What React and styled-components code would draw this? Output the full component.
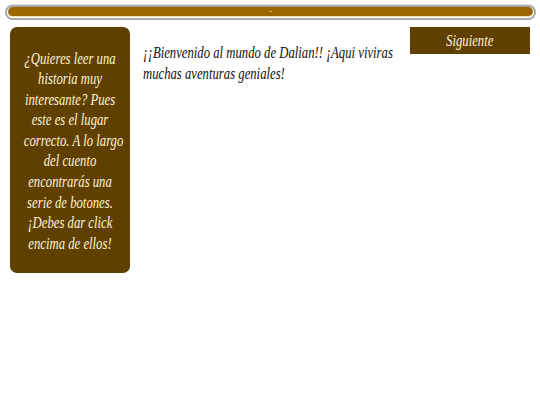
import React from "react";
import styled, { createGlobalStyle } from "styled-components";

const Global = createGlobalStyle`
  html, body { margin: 0; padding: 0; background: #fff; }
  body { font-family: "Liberation Serif", "DejaVu Serif", serif; font-style: italic; }
`;

const Page = styled.div`
  width: 540px;
  height: 405px;
  overflow: hidden;
  padding: 5px 4px 0 5px;
  box-sizing: border-box;
`;

const ProgressBar = styled.div`
  height: 15px;
  box-sizing: border-box;
  border: 2px solid #a8a8a8;
  border-radius: 8px;
  background: #fff;
  padding: 0 1px 1px;
  box-shadow: 0 -1px 0 #e4e4e4;
  display: flex;
`;

const ProgressFill = styled.div`
  flex: 1;
  border-radius: 5px;
  background: #996600;
  border-bottom: 1px solid #f2dfae;
  display: flex;
  align-items: center;
  justify-content: center;
`;

const Tick = styled.span`
  width: 3px;
  height: 1px;
  background: #e0b070;
`;

const Content = styled.div`
  display: flex;
  align-items: flex-start;
  margin-top: 7px;
  padding-left: 5px;
`;

const Sidebar = styled.aside`
  width: 120px;
  height: 246px;
  box-sizing: border-box;
  flex: none;
  padding: 21.5px 0 0;
  border-radius: 7px;
  background: #604000;
  color: #fff2d6;
  font-size: 16.5px;
  line-height: 20.6px;
  text-align: center;
  white-space: nowrap;
`;

const SidebarText = styled.div`
  transform: scaleX(0.77);
`;

const Story = styled.div`
  width: 258px;
  flex: none;
  margin: 15px 0 0 13px;
  color: #111;
  font-size: 16.5px;
  line-height: 21px;
  white-space: nowrap;
  transform: scaleX(0.77);
  transform-origin: left center;
`;

const NextButton = styled.button`
  width: 120px;
  height: 27px;
  flex: none;
  margin-left: 9px;
  padding: 1px 0 0;
  border: 0;
  background: #604000;
  color: #fff2d6;
  font: italic 16.5px "Liberation Serif", serif;
`;

const NextLabel = styled.span`
  display: inline-block;
  transform: scaleX(0.77);
`;

export default function App() {
  return (
    <Page>
      <Global />
      <ProgressBar>
        <ProgressFill>
          <Tick />
        </ProgressFill>
      </ProgressBar>
      <Content>
        <Sidebar>
          <SidebarText>
            ¿Quieres leer una<br />
            historia muy<br />
            interesante? Pues<br />
            este es el lugar<br />
            correcto. A lo largo<br />
            del cuento<br />
            encontrarás una<br />
            serie de botones.<br />
            ¡Debes dar click<br />
            encima de ellos!
          </SidebarText>
        </Sidebar>
        <Story>
          ¡¡Bienvenido al mundo de Dalian!! ¡Aqui viviras<br />
          muchas aventuras geniales!
        </Story>
        <NextButton>
          <NextLabel>Siguiente</NextLabel>
        </NextButton>
      </Content>
    </Page>
  );
}
